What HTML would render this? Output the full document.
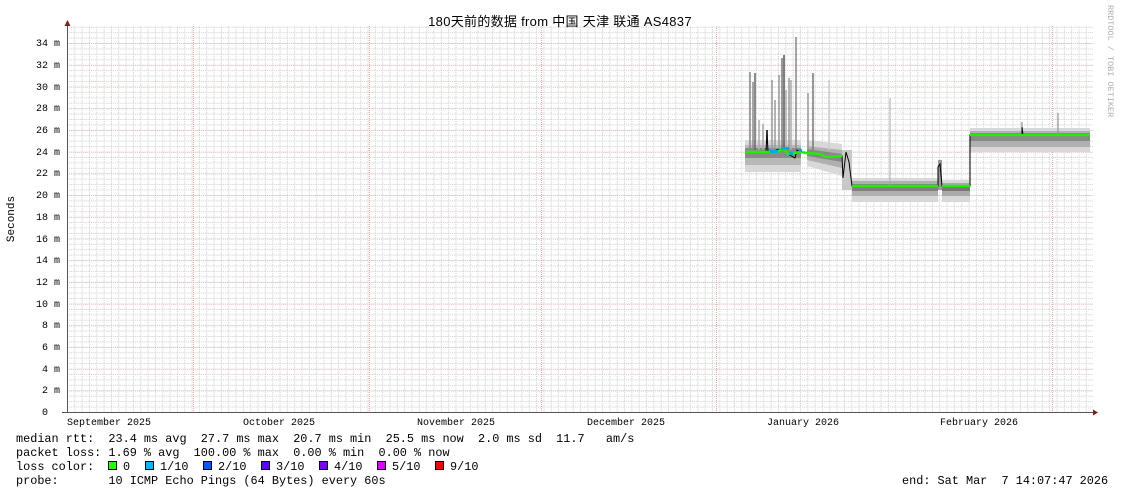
<!DOCTYPE html>
<html><head><meta charset="utf-8"><style>
html,body{margin:0;padding:0;background:#fff;}
body{width:1121px;height:494px;overflow:hidden;position:relative;}
svg{position:absolute;left:0;top:0;}
.m{font-family:"Liberation Mono","DejaVu Sans Mono",monospace;font-size:11.85px;fill:#000;}
.s{font-family:"Liberation Mono","DejaVu Sans Mono",monospace;font-size:10px;fill:#000;}
.t{font-family:"Liberation Sans","Noto Sans CJK SC",sans-serif;font-size:13px;fill:#000;letter-spacing:0.3px;}
</style></head><body>
<svg width="1121" height="494" xmlns="http://www.w3.org/2000/svg">
<defs>
<pattern id="mg" x="67" y="412" width="7.33" height="5.426" patternUnits="userSpaceOnUse">
<line x1="0.5" y1="0" x2="0.5" y2="5.426" stroke="#cfcfcf" stroke-width="1" stroke-dasharray="1,1"/>
<line x1="0" y1="0.5" x2="7.33" y2="0.5" stroke="#cfcfcf" stroke-width="1" stroke-dasharray="1,1"/>
</pattern>
<pattern id="Mg" x="67" y="412.5" width="1100" height="21.706" patternUnits="userSpaceOnUse">
<line x1="0" y1="0" x2="1100" y2="0" stroke="#e8a0a0" stroke-width="1" stroke-dasharray="1,1"/>
</pattern>
</defs>
<rect x="67" y="26" width="1026" height="386" fill="url(#mg)"/>
<rect x="67" y="30" width="1026" height="382" fill="url(#Mg)"/>
<g stroke="#f0a8a8" stroke-width="1" stroke-dasharray="1,1">
<line x1="193.5" y1="26" x2="193.5" y2="412"/><line x1="369.5" y1="26" x2="369.5" y2="412"/>
<line x1="541.5" y1="26" x2="541.5" y2="412"/><line x1="716.5" y1="26" x2="716.5" y2="412"/>
<line x1="1052.5" y1="26" x2="1052.5" y2="412"/>
</g>
<g>
<rect x="745" y="140" width="56" height="32" fill="#d8d8d8"/>
<rect x="745" y="145" width="56" height="20" fill="#b8b8b8"/>
<rect x="745" y="148" width="56" height="10" fill="#8a8a8a"/>
<polygon points="807,140 842,144 842,176 807,166" fill="#d8d8d8"/>
<polygon points="807,146 842,150 842,168 807,160" fill="#b0b0b0"/>
<polygon points="807,149 842,154 842,162 807,156" fill="#888"/>
<rect x="842" y="150" width="10" height="40" fill="#c8c8c8"/>
<rect x="852" y="178" width="86" height="24" fill="#d8d8d8"/>
<rect x="852" y="181" width="86" height="15" fill="#b0b0b0"/>
<rect x="852" y="184" width="86" height="7" fill="#808080"/>
<rect x="938" y="160" width="4" height="30" fill="#999"/>
<rect x="942" y="180" width="28" height="22" fill="#d8d8d8"/>
<rect x="942" y="183" width="28" height="13" fill="#aaa"/>
<rect x="942" y="185" width="28" height="6" fill="#777"/>
<rect x="970" y="128" width="120" height="24" fill="#d8d8d8"/>
<rect x="970" y="131" width="120" height="16" fill="#b0b0b0"/>
<rect x="970" y="133" width="120" height="8" fill="#888"/>
</g>
<g stroke-width="1.5">
<line x1="750" y1="150" x2="750" y2="72" stroke="#888"/>
<line x1="753" y1="150" x2="753" y2="82" stroke="#888"/>
<line x1="755" y1="150" x2="755" y2="73" stroke="#666"/>
<line x1="759" y1="150" x2="759" y2="120" stroke="#aaa"/>
<line x1="763" y1="150" x2="763" y2="124" stroke="#aaa"/>
<line x1="767" y1="140" x2="767" y2="130" stroke="#000"/>
<line x1="772" y1="150" x2="772" y2="80" stroke="#999"/>
<line x1="775" y1="150" x2="775" y2="100" stroke="#999"/>
<line x1="779" y1="150" x2="779" y2="75" stroke="#999"/>
<line x1="782" y1="150" x2="782" y2="58" stroke="#777"/>
<line x1="784" y1="150" x2="784" y2="55" stroke="#555"/>
<line x1="786" y1="150" x2="786" y2="90" stroke="#aaa"/>
<line x1="789" y1="150" x2="789" y2="78" stroke="#999"/>
<line x1="791" y1="150" x2="791" y2="80" stroke="#aaa"/>
<line x1="796" y1="150" x2="796" y2="37" stroke="#888"/>
<line x1="808" y1="150" x2="808" y2="93" stroke="#999"/>
<line x1="813" y1="150" x2="813" y2="73" stroke="#777"/>
<line x1="829" y1="150" x2="829" y2="80" stroke="#ccc"/>
<line x1="890" y1="186" x2="890" y2="98" stroke="#aaa" stroke-width="1"/>
<line x1="1058" y1="135" x2="1058" y2="113" stroke="#888" stroke-width="1"/>
<line x1="1022" y1="135" x2="1022" y2="122" stroke="#777" stroke-width="1"/>
</g>
<polyline fill="none" stroke="#000" stroke-width="1" points="745,152 766,152 767,132 768,152 781,149 785,150 788,154 795,158 797,150 800,152 807,153 820,154 826,157 842,156 843,178 846,152 849,162 852,186 938,186 938,167 940,164 942,186 970,186 970,135 1022,135 1022,127 1023,135 1090,135"/>
<polyline fill="none" stroke="#22ee00" stroke-width="2.5" points="745,152 778,152 781,149 785,150 788,154 800,152 807,153 820,154 826,157 842,156"/>
<polyline fill="none" stroke="#22ee00" stroke-width="2.5" points="852,186 938,186"/>
<polyline fill="none" stroke="#22ee00" stroke-width="2.5" points="942,186 970,186"/>
<polyline fill="none" stroke="#22ee00" stroke-width="2.5" points="970,135 1090,135"/>
<g fill="#00aaee"><rect x="770" y="150" width="8" height="3"/><rect x="781" y="147" width="8" height="3"/><rect x="789" y="152" width="4" height="3"/><rect x="799" y="149" width="3" height="3"/></g>
<line x1="67.5" y1="26" x2="67.5" y2="413" stroke="#555" stroke-width="1"/>
<line x1="62" y1="412.5" x2="1094" y2="412.5" stroke="#555" stroke-width="1"/>
<polygon points="64.5,26 70.5,26 67.5,20" fill="#8b1a1a"/>
<polygon points="1093,409.5 1093,415.5 1098,412.5" fill="#8b1a1a"/>
<g class="s" text-anchor="end">
<text x="60" y="46">34 m</text><text x="60" y="68">32 m</text><text x="60" y="90">30 m</text><text x="60" y="111">28 m</text><text x="60" y="133">26 m</text><text x="60" y="155">24 m</text><text x="60" y="176">22 m</text><text x="60" y="198">20 m</text><text x="60" y="220">18 m</text><text x="60" y="242">16 m</text><text x="60" y="263">14 m</text><text x="60" y="285">12 m</text><text x="60" y="307">10 m</text><text x="60" y="328">8 m</text><text x="60" y="350">6 m</text><text x="60" y="372">4 m</text><text x="60" y="393">2 m</text><text x="48" y="415">0</text>
</g>
<g class="s" text-anchor="middle">
<text x="109" y="425">September 2025</text><text x="279" y="425">October 2025</text><text x="456" y="425">November 2025</text><text x="626" y="425">December 2025</text><text x="803" y="425">January 2026</text><text x="979" y="425">February 2026</text>
</g>
<text class="m" style="font-size:11px" transform="translate(14,219) rotate(-90)" text-anchor="middle">Seconds</text>
<text class="t" x="560" y="26" text-anchor="middle">180天前的数据 from 中国 天津 联通 AS4837</text>
<text class="s" style="font-size:8.5px;fill:#b0b0b0" transform="translate(1108,5) rotate(90)">RRDTOOL / TOBI OETIKER</text>
<g class="m">
<text x="16" y="442" xml:space="preserve">median rtt:  23.4 ms avg  27.7 ms max  20.7 ms min  25.5 ms now  2.0 ms sd  11.7   am/s</text>
<text x="16" y="456" xml:space="preserve">packet loss: 1.69 % avg  100.00 % max  0.00 % min  0.00 % now</text>
<text x="16" y="470" xml:space="preserve">loss color:</text>
<text x="16" y="484" xml:space="preserve">probe:       10 ICMP Echo Pings (64 Bytes) every 60s</text>
<text x="902" y="484" xml:space="preserve">end: Sat Mar  7 14:07:47 2026</text>
<text x="123" y="470">0</text><text x="160" y="470">1/10</text><text x="218" y="470">2/10</text><text x="276" y="470">3/10</text><text x="334" y="470">4/10</text><text x="392" y="470">5/10</text><text x="450" y="470">9/10</text>
</g>
<g stroke="#000" stroke-width="1">
<rect x="108.5" y="461.5" width="8" height="8" fill="#26ff00"/>
<rect x="145.5" y="461.5" width="8" height="8" fill="#00b8ff"/>
<rect x="203.5" y="461.5" width="8" height="8" fill="#0059ff"/>
<rect x="261.5" y="461.5" width="8" height="8" fill="#5e00ff"/>
<rect x="319.5" y="461.5" width="8" height="8" fill="#7e00ff"/>
<rect x="377.5" y="461.5" width="8" height="8" fill="#dd00ff"/>
<rect x="435.5" y="461.5" width="8" height="8" fill="#ff0000"/>
</g>
</svg>
</body></html>
